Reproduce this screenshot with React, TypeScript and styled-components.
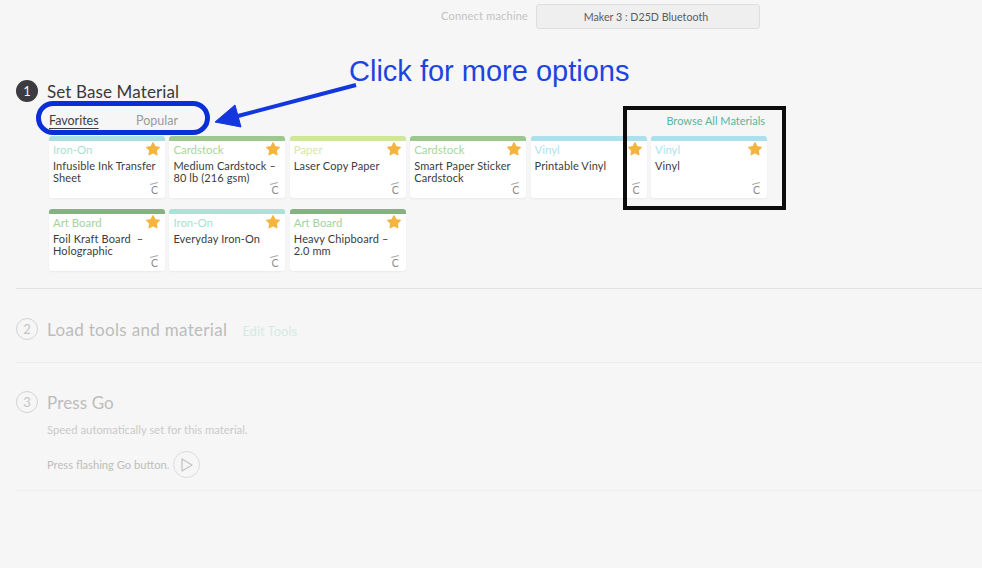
import React from 'react';
import styled, { createGlobalStyle } from 'styled-components';

const GlobalStyle = createGlobalStyle`
  html, body {
    margin: 0;
    padding: 0;
    background: #f6f6f6;
    font-family: 'Lato', 'Open Sans', sans-serif;
  }
`;

const materials = [
  { type: 'Iron-On', name: 'Infusible Ink Transfer Sheet', bar: '#a9e0df', label: '#a5e3d0' },
  { type: 'Cardstock', name: 'Medium Cardstock – 80 lb (216 gsm)', bar: '#9cc78e', label: '#a6d79a' },
  { type: 'Paper', name: 'Laser Copy Paper', bar: '#cfe59b', label: '#d5e8a3' },
  { type: 'Cardstock', name: 'Smart Paper Sticker Cardstock', bar: '#9cc78e', label: '#a6d79a' },
  { type: 'Vinyl', name: 'Printable Vinyl', bar: '#abe0ec', label: '#aee3f0' },
  { type: 'Vinyl', name: 'Vinyl', bar: '#abe0ec', label: '#aee3f0' },
  { type: 'Art Board', name: 'Foil Kraft Board  – Holographic', bar: '#86b283', label: '#a3d3a0' },
  { type: 'Iron-On', name: 'Everyday Iron-On', bar: '#a9e3d8', label: '#a5e3d0' },
  { type: 'Art Board', name: 'Heavy Chipboard – 2.0 mm', bar: '#86b283', label: '#a3d3a0' },
];

const App: React.FC = () => {
  return (
    <Page>
      <GlobalStyle />
      <TopBar>
        <ConnectLabel>Connect machine</ConnectLabel>
        <MachineSelect>Maker 3 : D25D Bluetooth</MachineSelect>
      </TopBar>

      <ActiveSection>
        <StepHeader>
          <StepBadge>1</StepBadge>
          <StepTitle>Set Base Material</StepTitle>
        </StepHeader>
        <TabRow>
          <Tab $active>Favorites</Tab>
          <Tab>Popular</Tab>
          <BrowseLink>Browse All Materials</BrowseLink>
        </TabRow>
        <CardGrid>
          {materials.map((m) => (
            <Card key={m.name} $bar={m.bar}>
              <CardTop>
                <CardType $color={m.label}>{m.type}</CardType>
                <Star viewBox="0 0 24 24">
                  <path
                    d="M12 2.6l2.9 6 6.5.9-4.7 4.6 1.1 6.5L12 17.5l-5.8 3.1 1.1-6.5-4.7-4.6 6.5-.9z"
                    fill="#f4b540"
                    stroke="#f4b540"
                    strokeWidth="2"
                    strokeLinejoin="round"
                  />
                </Star>
              </CardTop>
              <CardName>{m.name}</CardName>
              <CutMark>C</CutMark>
            </Card>
          ))}
        </CardGrid>
      </ActiveSection>

      <LoadSection>
        <StepHeader>
          <StepCircle>2</StepCircle>
          <LoadTitle>Load tools and material</LoadTitle>
          <EditTools>Edit Tools</EditTools>
        </StepHeader>
      </LoadSection>

      <GoSection>
        <StepHeader>
          <StepCircle>3</StepCircle>
          <MutedTitle>Press Go</MutedTitle>
        </StepHeader>
        <Hint>Speed automatically set for this material.</Hint>
        <GoRow>
          <GoText>Press flashing Go button.</GoText>
          <GoButton>
            <svg width="14" height="16" viewBox="0 0 14 16">
              <path d="M2 2l10 6-10 6z" fill="none" stroke="#c4c4c4" strokeWidth="1.3" strokeLinejoin="round" />
            </svg>
          </GoButton>
        </GoRow>
      </GoSection>

      <Callout>Click for more options</Callout>
      <TabsRing />
      <ArrowMark viewBox="0 0 160 60">
        <path d="M146 7L28 38" stroke="#1237de" strokeWidth="4" fill="none" />
        <path d="M5 44L25 27l6 22z" fill="#1237de" stroke="#1237de" strokeWidth="1" strokeLinejoin="round" />
      </ArrowMark>
      <BrowseBox />
    </Page>
  );
};

const Page = styled.div`
  position: relative;
  width: 982px;
  height: 568px;
  overflow: hidden;
  background: #f6f6f6;
`;

const TopBar = styled.div`
  display: flex;
  align-items: center;
  height: 25px;
  padding: 4px 0 0 441px;
`;

const ConnectLabel = styled.span`
  width: 95px;
  margin-top: -2px;
  font-size: 11px;
  letter-spacing: 0.2px;
  color: #c2c2c2;
  white-space: nowrap;
`;

const MachineSelect = styled.div`
  box-sizing: border-box;
  width: 224px;
  height: 25px;
  padding-right: 4px;
  line-height: 23px;
  text-align: center;
  font-size: 10.7px;
  color: #5c5c5c;
  background: #efefef;
  border: 1px solid #dedede;
  border-radius: 3px;
`;

const ActiveSection = styled.section`
  box-sizing: border-box;
  height: 210px;
  margin: 50px 0 0 16px;
  border-bottom: 1px solid #e2e2e2;
`;

const StepHeader = styled.div`
  display: flex;
  align-items: center;
  height: 24px;
`;

const StepBadge = styled.div`
  width: 22px;
  height: 22px;
  margin-right: 9px;
  border-radius: 50%;
  background: #3c3c40;
  color: #f0f0f0;
  font-size: 13px;
  line-height: 22px;
  text-align: center;
`;

const StepCircle = styled(StepBadge)`
  box-sizing: border-box;
  background: transparent;
  border: 1px solid #d4d4d4;
  color: #c4c4c4;
  line-height: 20px;
`;

const StepTitle = styled.h2`
  margin: 0;
  font-size: 17px;
  font-weight: 400;
  letter-spacing: 0.12px;
  color: #3a3a3a;
`;

const MutedTitle = styled(StepTitle)`
  color: #bcbcbc;
`;

const LoadTitle = styled(MutedTitle)`
  letter-spacing: 0.32px;
`;

const TabRow = styled.div`
  box-sizing: border-box;
  display: flex;
  align-items: center;
  width: 749px;
  height: 22px;
  margin-top: 6px;
  padding-left: 33px;
`;

const Tab = styled.span<{ $active?: boolean }>`
  width: 87px;
  font-size: 12.5px;
  color: ${(p) => (p.$active ? '#3f3f3f' : '#9a9a9a')};
  text-decoration: ${(p) => (p.$active ? 'underline' : 'none')};
  text-underline-offset: 3px;
`;

const BrowseLink = styled.span`
  margin-left: auto;
  font-size: 11px;
  color: #5cb598;
`;

const CardGrid = styled.div`
  display: grid;
  grid-template-columns: repeat(6, 116px);
  grid-auto-rows: 62px;
  column-gap: 4.4px;
  row-gap: 11px;
  margin: 5px 0 0 33px;
`;

const Card = styled.div<{ $bar: string }>`
  position: relative;
  box-sizing: border-box;
  padding: 0 4px;
  background: #fff;
  border-top: 5px solid ${(p) => p.$bar};
  border-radius: 3px;
  box-shadow: 0 1px 2px rgba(0, 0, 0, 0.05);
`;

const CardTop = styled.div`
  display: flex;
  align-items: center;
  justify-content: space-between;
  height: 16px;
`;

const CardType = styled.span<{ $color: string }>`
  font-size: 11.4px;
  color: ${(p) => p.$color};
`;

const Star = styled.svg`
  width: 16px;
  height: 16px;
`;

const CardName = styled.div`
  margin-top: 3px;
  font-size: 11px;
  line-height: 12px;
  letter-spacing: 0.12px;
  white-space: pre-wrap;
  color: #3c3c3c;
`;

const CutMark = styled.span`
  position: absolute;
  right: 7px;
  bottom: 2px;
  font-size: 10.5px;
  line-height: 11px;
  color: #8a8a8a;

  &::before {
    content: '';
    position: absolute;
    top: -2px;
    left: -1px;
    width: 8px;
    height: 1px;
    background: #a8a8a8;
    transform: rotate(-14deg);
  }
`;

const LoadSection = styled.section`
  box-sizing: border-box;
  height: 74px;
  margin-left: 16px;
  padding-top: 28px;
  border-bottom: 1px solid #ececec;
`;

const EditTools = styled.span`
  margin: 3px 0 0 15px;
  font-size: 13px;
  color: #d5eae2;
`;

const GoSection = styled.section`
  box-sizing: border-box;
  height: 128px;
  margin-left: 16px;
  padding-top: 27px;
  border-bottom: 1px solid #efefef;
`;

const Hint = styled.div`
  margin: 9px 0 0 31px;
  font-size: 11.3px;
  line-height: 13px;
  color: #cacaca;
`;

const GoRow = styled.div`
  display: flex;
  align-items: center;
  margin: 15px 0 0 31px;
`;

const GoText = styled.span`
  font-size: 11.2px;
  color: #bdbdbd;
`;

const GoButton = styled.div`
  box-sizing: border-box;
  display: flex;
  align-items: center;
  justify-content: center;
  width: 27px;
  height: 27px;
  margin-left: 4px;
  border: 1px solid #dcdcdc;
  border-radius: 50%;
`;

const Callout = styled.div`
  position: absolute;
  left: 349px;
  top: 54px;
  font-family: 'Liberation Sans', Arial, sans-serif;
  font-size: 29px;
  line-height: 34px;
  color: #1c45e0;
  white-space: nowrap;
`;

const TabsRing = styled.div`
  position: absolute;
  left: 36px;
  top: 101px;
  box-sizing: border-box;
  width: 174px;
  height: 34px;
  border: 5px solid #0a2fd6;
  border-radius: 17px;
`;

const ArrowMark = styled.svg`
  position: absolute;
  left: 210px;
  top: 78px;
  width: 160px;
  height: 60px;
`;

const BrowseBox = styled.div`
  position: absolute;
  left: 623px;
  top: 106px;
  box-sizing: border-box;
  width: 163px;
  height: 104px;
  border: 4px solid #0c0c0c;
`;

export default App;
